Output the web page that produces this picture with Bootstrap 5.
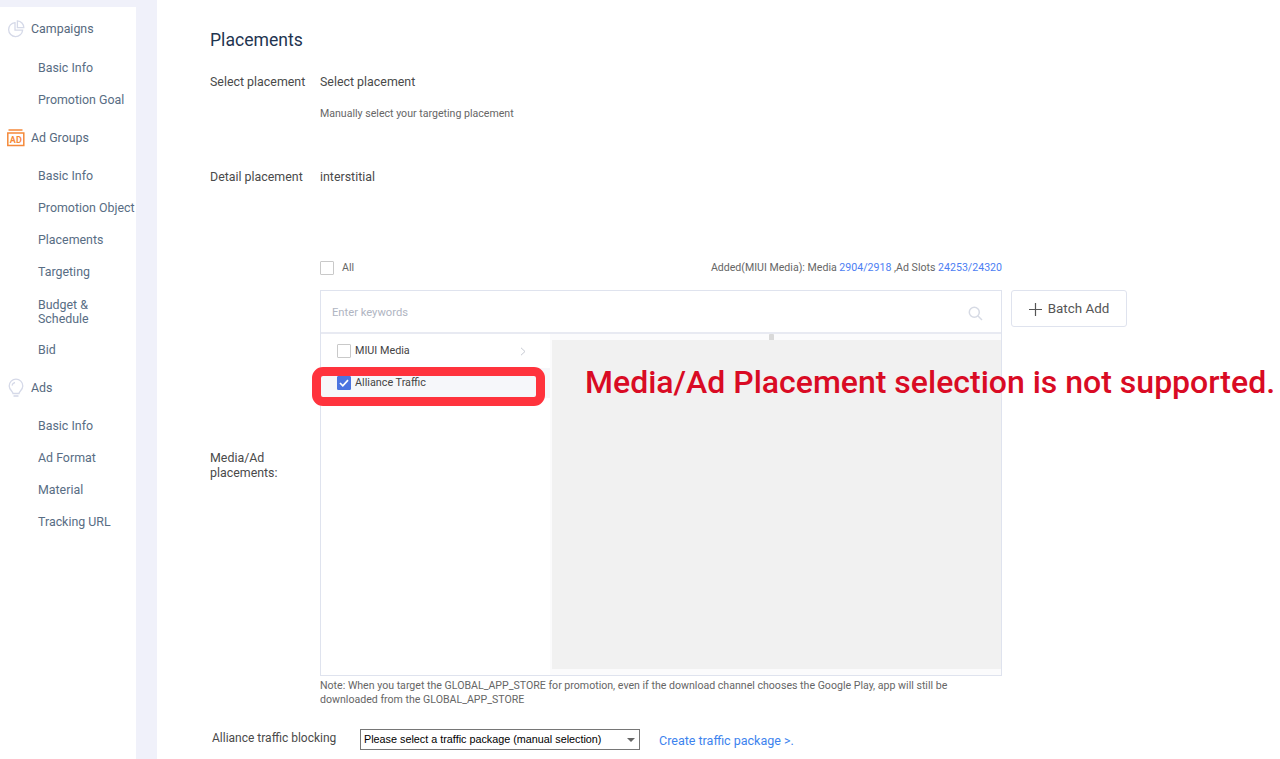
<!DOCTYPE html>
<html lang="en"><head><meta charset="utf-8"><title>Placements</title>
<link href="https://cdn.jsdelivr.net/npm/bootstrap@5.3.0/dist/css/bootstrap.min.css" rel="stylesheet">
<style>
html,body{height:759px;overflow:hidden}
body{font-family:Roboto,"Liberation Sans",sans-serif;background:#fff;color:#4a4a4a;font-size:12.4px}
.shell{height:759px}
.rail{width:157px;flex:none;background:#f0f1fa;padding-top:7px}
.rail-inner{width:136px;height:752px;background:#fff;font-size:12.4px;line-height:14px;overflow:hidden;padding-top:6px}
.nav-head{height:32px;padding-left:7px;gap:6px;color:#56697e}
.nav-head svg{flex:none}
.nav-gap{margin-top:6px}
.nav-first{margin-top:7px}
.nav-sub{padding-left:38px;height:32px;display:flex;align-items:center;white-space:nowrap;color:#586d84}
.nav-sub.tall{height:46px;padding-top:2px}
.main-area{padding:0 0 0 53px;position:relative;flex:1;min-width:0}
.ttl{font-size:17.6px;font-weight:400;color:#1f3550;margin:0;line-height:22px;padding-top:29px}
.lbl{width:110px;flex:none;line-height:15px}
.line-a{margin-top:23px;line-height:15px}
.line-b{margin:18px 0 0 110px;font-size:10.6px;color:#666;line-height:14px}
.line-c{margin-top:48px;line-height:15px}
.picker-row{margin-top:74px}
.lbl-media{margin-bottom:36px}
.chk{width:14px;height:14px;border:1px solid #c9c9c9;background:#fff;display:inline-block;flex:none;border-radius:1px}
.chk.on{background:#4c74e0;border-color:#4c74e0;display:flex;align-items:center;justify-content:center}
.picker-col{width:682px;flex:none}
.top-line{height:32px;font-size:10.6px;color:#666;padding-top:2px}
.top-line .chk{margin-right:8px}
.counts{line-height:14px;margin-top:1px}
.blue{color:#4c7ef3}
.pick-wrap{width:818px}
.pbox{width:682px;height:386px;border:1px solid #dfe3ee;background:#fff;flex:none}
.pbox-search{height:43px;border-bottom:2px solid #e8eaf2;padding:3px 18px 0 11px;color:#b0b5c2;font-size:11.2px;flex:none}
.pbox-body{flex:1;min-height:0;position:relative}
.pbox-left{width:229px;flex:none;font-size:10.8px;color:#444}
.opt{height:34px;padding:0 24px 0 16px;gap:4px}
.opt-sel{background:#f6f7fa;height:30px}
.pbox-right{flex:1;background:#fbfbfc;padding:6px 0 6px 2px;position:relative}
.pane{height:100%;background:#f1f1f1;width:100%}
.grip{position:absolute;left:219px;top:0;width:5px;height:6px;background:#d9d9d9;border-radius:1px 1px 0 0}
.add-btn{margin-left:9px;width:116px;height:37px;border:1px solid #dfe3ee;border-radius:3px;background:#fff;color:#555;font-size:13.4px;gap:6px;padding:2px 0 0}
.note{width:660px;font-size:10.6px;line-height:14px;color:#666;margin-top:3px}
.block-row{margin-top:20px;margin-left:2px;height:24px}
.block-lbl{width:148px;flex:none;font-size:12px;padding-bottom:3px}
.fake-select{width:280px;height:21px;border:1px solid #767676;font-family:"Liberation Sans",Arial,sans-serif;font-size:10.8px;color:#000;padding:1px 4px 0 3px;background:#fff}
.caret{width:0;height:0;border-left:4px solid transparent;border-right:4px solid transparent;border-top:4px solid #666}
.pkg-link{margin-left:19px;color:#3d83ee;font-size:12.5px;text-decoration:none;padding-top:5px}
.callout{position:absolute;left:155px;top:367px;width:233px;height:39px;border:9px solid #ff333d;border-radius:11px}
.warn{position:absolute;left:428px;top:362px;font-size:32px;font-weight:500;line-height:40px;color:#d90b24;white-space:nowrap}
</style></head>
<body>
<div class="shell d-flex">
<aside class="rail"><div class="rail-inner">
 <div class="nav-head d-flex align-items-center">
  <svg width="18" height="18" viewBox="0 0 18 18" fill="none" stroke="#d5d9e8" stroke-width="1.3"><path d="M8 2.6a7 7 0 1 0 7.6 7.6H8z"/><path d="M10.4.9v6.8h6.4A6.8 6.8 0 0 0 10.4.9z"/></svg>
  <span>Campaigns</span></div>
 <div class="nav-sub nav-first">Basic Info</div>
 <div class="nav-sub">Promotion Goal</div>
 <div class="nav-head nav-gap d-flex align-items-center">
  <svg width="18" height="18" viewBox="0 0 18 18" fill="none" stroke="#f5893a" stroke-width="1.5"><path d="M1.5 1h14"/><path d="M.8 4h16v12.600h-16z"/><text x="8.800" y="13.800" font-family="Roboto,sans-serif" font-size="9" font-weight="700" text-anchor="middle" fill="#f5893a" stroke="none">AD</text></svg>
  <span>Ad Groups</span></div>
 <div class="nav-sub nav-gap">Basic Info</div>
 <div class="nav-sub">Promotion Object</div>
 <div class="nav-sub">Placements</div>
 <div class="nav-sub">Targeting</div>
 <div class="nav-sub tall">Budget &amp;<br>Schedule</div>
 <div class="nav-sub">Bid</div>
 <div class="nav-head nav-gap d-flex align-items-center">
  <svg width="18" height="20" viewBox="0 0 18 20" fill="none" stroke="#d5d9e8" stroke-width="1.3"><path d="M6 15.500c0-2-3.800-3.600-3.800-7.600a6.800 6.800 0 0 1 13.600 0c0 4-3.800 5.600-3.800 7.600z"/><path d="M6.500 18h5" stroke-width="1.600"/><path d="M5 7.500a4 4 0 0 1 3-3"/></svg>
  <span>Ads</span></div>
 <div class="nav-sub nav-gap">Basic Info</div>
 <div class="nav-sub">Ad Format</div>
 <div class="nav-sub">Material</div>
 <div class="nav-sub">Tracking URL</div>
</div></aside>
<main class="main-area">
 <h1 class="ttl">Placements</h1>
 <div class="d-flex line-a"><div class="lbl">Select placement</div><div>Select placement</div></div>
 <div class="line-b">Manually select your targeting placement</div>
 <div class="d-flex line-c"><div class="lbl">Detail placement</div><div>interstitial</div></div>
 <div class="d-flex align-items-center picker-row">
  <div class="lbl lbl-media">Media/Ad placements:</div>
  <div class="picker-col">
   <div class="top-line d-flex align-items-start justify-content-between">
    <div class="d-flex align-items-center"><span class="chk"></span>All</div>
    <div class="counts">Added(MIUI Media): Media <span class="blue">2904/2918</span> ,Ad Slots <span class="blue">24253/24320</span></div>
   </div>
   <div class="d-flex pick-wrap"><div class="pbox d-flex flex-column">
    <div class="pbox-search d-flex align-items-center justify-content-between"><span>Enter keywords</span>
     <svg width="15" height="15" viewBox="0 0 15 15" fill="none" stroke="#d6dae4" stroke-width="1.5"><circle cx="6.300" cy="6.300" r="5"/><path d="M10 10l4 4"/></svg></div>
    <div class="pbox-body d-flex">
     <div class="pbox-left">
      <div class="opt d-flex align-items-center"><span class="chk"></span><span class="flex-grow-1">MIUI Media</span>
       <svg width="6" height="9" viewBox="0 0 6 9" fill="none" stroke="#c6c9d2"><path d="M1 .8l4 3.700-4 3.700"/></svg></div>
      <div class="opt opt-sel d-flex align-items-center"><span class="chk on"><svg width="10" height="8" viewBox="0 0 10 8" fill="none" stroke="#fff" stroke-width="1.700"><path d="M1 4l2.800 2.800L9 1.200"/></svg></span><span>Alliance Traffic</span></div>
     </div>
     <div class="pbox-right"><span class="grip"></span><div class="pane"></div></div>
    </div>
   </div>
   <div><button type="button" class="add-btn btn d-flex align-items-center justify-content-center"><svg width="13" height="13" viewBox="0 0 13 13" stroke="#555" stroke-width="1.200"><path d="M6.500 0v13M0 6.500h13"/></svg>Batch Add</button></div>
   </div>
   <div class="note">Note: When you target the GLOBAL_APP_STORE for promotion, even if the download channel chooses the Google Play, app will still be downloaded from the GLOBAL_APP_STORE</div>
  </div>
 </div>
 <div class="d-flex align-items-center block-row">
  <div class="block-lbl">Alliance traffic blocking</div>
  <div class="fake-select d-flex align-items-center justify-content-between"><span>Please select a traffic package (manual selection)</span><span class="caret"></span></div>
  <a class="pkg-link" href="#">Create traffic package &gt;.</a>
 </div>
 <div class="callout"></div>
 <div class="warn">Media/Ad Placement selection is not supported.</div>
</main>
</div>
</body></html>
